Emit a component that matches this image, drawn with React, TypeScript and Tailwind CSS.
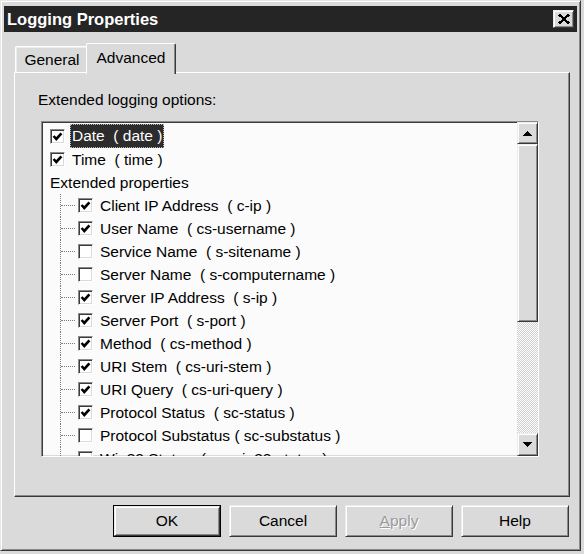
import React from "react";

// Classic 3D edges used across the dialog
const raised =
  "border border-t-[#ececec] border-l-[#ececec] border-r-[#383838] border-b-[#383838] shadow-[inset_1px_1px_0_#fff,inset_-1px_-1px_0_#8a8a8a]";
const sunken =
  "border border-t-[#8a8a8a] border-l-[#8a8a8a] border-r-white border-b-white shadow-[inset_1px_1px_0_#3c3c3c,inset_-1px_-1px_0_#dadada]";

type Field = { label: string; on: boolean };

const fields: Field[] = [
  { label: "Client IP Address  ( c-ip )", on: true },
  { label: "User Name  ( cs-username )", on: true },
  { label: "Service Name  ( s-sitename )", on: false },
  { label: "Server Name  ( s-computername )", on: false },
  { label: "Server IP Address  ( s-ip )", on: true },
  { label: "Server Port  ( s-port )", on: true },
  { label: "Method  ( cs-method )", on: true },
  { label: "URI Stem  ( cs-uri-stem )", on: true },
  { label: "URI Query  ( cs-uri-query )", on: true },
  { label: "Protocol Status  ( sc-status )", on: true },
  { label: "Protocol Substatus ( sc-substatus )", on: false },
  { label: "Win32 Status  ( sc-win32-status )", on: false },
];

function CheckBox({ on }: { on: boolean }) {
  return (
    <div className={`w-[15px] h-[15px] shrink-0 bg-white flex items-center justify-center ${sunken}`}>
      {on && (
        <svg width="11" height="11" viewBox="0 0 11 11">
          <polyline points="1.6,5 4.3,8 9.4,2.4" fill="none" stroke="#000" strokeWidth="2.6" />
        </svg>
      )}
    </div>
  );
}

function Arrow({ up }: { up?: boolean }) {
  return (
    <svg width="9" height="5" viewBox="0 0 9 5" shapeRendering="crispEdges">
      {up ? <polygon points="4.5,0 9,5 0,5" fill="#000" /> : <polygon points="0,0 9,0 4.5,5" fill="#000" />}
    </svg>
  );
}

function TreeRow({ field }: { field: Field }) {
  return (
    <div className="flex h-[23px] items-center shrink-0">
      <div className="w-[18px] shrink-0" />
      <div className="w-[18px] h-full shrink-0 border-l border-dotted border-[#7c7c7c] flex items-center">
        <div className="w-[14px] border-t border-dotted border-[#7c7c7c]" />
      </div>
      <CheckBox on={field.on} />
      <span className="ml-[5px] px-[2px] whitespace-pre">{field.label}</span>
    </div>
  );
}

export default function App() {
  return (
    <div className="w-[584px] h-[554px] bg-[#dadada] overflow-hidden text-[15.5px] text-black font-['Liberation_Sans',Arial,sans-serif]">
      <div className="w-[581px] h-[551px] border border-t-[#e6e6e6] border-l-[#e6e6e6] border-r-[#383838] border-b-[#383838] shadow-[inset_1px_1px_0_#fff,inset_-1px_-1px_0_#8a8a8a] p-[3px] flex flex-col">
        {/* Title bar */}
        <div className="mt-[2px] h-[26px] bg-[#252525] flex items-center justify-between pl-[3px] pr-[3px]">
          <span className="text-white font-bold text-[16.5px] leading-none">Logging Properties</span>
          <div className={`w-[21px] h-[18px] bg-[#dadada] flex items-center justify-center ${raised}`}>
            <svg width="12" height="10" viewBox="0 0 12 10" shapeRendering="crispEdges">
              <path d="M1 0.5 L11 9.5 M11 0.5 L1 9.5" stroke="#000" strokeWidth="2.4" />
            </svg>
          </div>
        </div>

        {/* Tabs */}
        <div className="mt-[11px] ml-[11px] flex items-end">
          <div className="w-[71px] h-[26px] border-t border-l border-white rounded-tl-[2px] shadow-[inset_1px_1px_0_#ececec] flex items-center justify-center pl-[2px]">
            General
          </div>
          <div className="relative z-10 -mb-[2px] w-[90px] h-[31px] bg-[#dadada] border-t border-l border-white border-r border-r-[#383838] rounded-tl-[2px] rounded-tr-[2px] shadow-[inset_-1px_0_0_#8a8a8a] flex items-center justify-center pb-[3px]">
            Advanced
          </div>
        </div>

        {/* Tab page */}
        <div className="ml-[10px] w-[556px] h-[425px] border border-t-white border-l-white border-r-[#383838] border-b-[#383838] shadow-[inset_-1px_-1px_0_#8a8a8a] pl-[23px] pt-[17px] flex flex-col">
          <div className="h-[20px] leading-[20px]">Extended logging options:</div>

          <div className={`mt-[11px] ml-[3px] w-[498px] h-[336px] bg-[#fbfbfb] flex ${sunken}`}>
            <div className="flex-1 min-w-0 overflow-hidden flex flex-col pt-[2px]">
              <div className="flex h-[24px] items-center shrink-0 pl-[8px]">
                <CheckBox on />
                <span className="ml-[5px] px-[2px] h-[24px] leading-[24px] whitespace-pre bg-[#2c2c2c] text-white outline outline-1 outline-dotted outline-[#b8b8b8] -outline-offset-1">
                  Date  ( date )
                </span>
              </div>
              <div className="flex h-[23px] items-center shrink-0 pl-[8px]">
                <CheckBox on />
                <span className="ml-[5px] px-[2px] whitespace-pre">Time  ( time )</span>
              </div>
              <div className="flex h-[23px] items-center shrink-0 pl-[6px]">
                <span className="px-[2px]">Extended properties</span>
              </div>
              {fields.map((f) => (
                <TreeRow key={f.label} field={f} />
              ))}
            </div>

            {/* Vertical scrollbar */}
            <div className="w-[21px] shrink-0 flex flex-col">
              <div className={`h-[22px] shrink-0 bg-[#dadada] flex items-center justify-center ${raised}`}>
                <Arrow up />
              </div>
              <div className={`h-[178px] shrink-0 bg-[#dadada] ${raised}`} />
              <div className="flex-1 bg-[repeating-conic-gradient(#ffffff_0_25%,#cfcfcf_0_50%)] bg-[length:2px_2px]" />
              <div className={`h-[23px] shrink-0 bg-[#dadada] flex items-center justify-center ${raised}`}>
                <Arrow />
              </div>
            </div>
          </div>
        </div>

        {/* Dialog buttons */}
        <div className="mt-[8px] pr-[8px] flex justify-end gap-[8px]">
          <div className="w-[108px] h-[32px] border border-black">
            <div className={`w-full h-full flex items-center justify-center ${raised}`}>OK</div>
          </div>
          <div className={`w-[108px] h-[32px] flex items-center justify-center ${raised}`}>Cancel</div>
          <div className={`w-[108px] h-[32px] flex items-center justify-center text-[#9a9a9a] [text-shadow:1px_1px_0_#fff] ${raised}`}>
            <span>
              <span className="underline">A</span>pply
            </span>
          </div>
          <div className={`w-[108px] h-[32px] flex items-center justify-center ${raised}`}>Help</div>
        </div>
      </div>
    </div>
  );
}
